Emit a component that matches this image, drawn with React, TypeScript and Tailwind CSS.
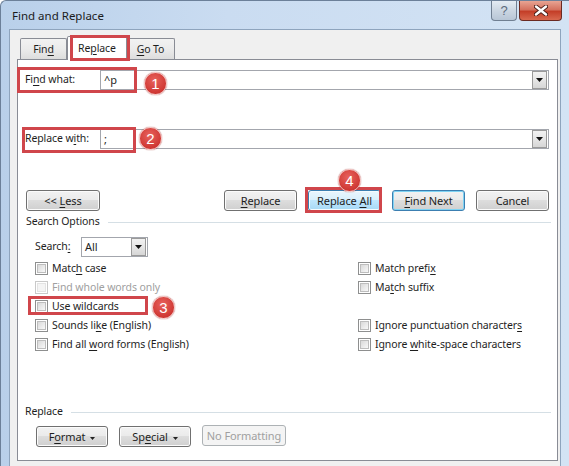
import React from "react";

type BtnProps = {
  children: React.ReactNode;
  className?: string;
  variant?: "normal" | "hover" | "default" | "disabled";
};

const WinButton: React.FC<BtnProps> = ({ children, className = "", variant = "normal" }) => {
  let look =
    "border-[#707070] bg-[linear-gradient(#f2f2f2,#ebebeb_45%,#dddddd_50%,#cfcfcf)] shadow-[inset_0_0_0_1px_#fbfbfb] text-[#1e1e1e]";
  if (variant === "hover")
    look =
      "border-[#3c7fb1] bg-[linear-gradient(#eaf6fd,#d9f0fc_45%,#bee6fd_50%,#a7d9f5)] shadow-[inset_0_0_0_1px_#f4fbfe] text-[#1e1e1e]";
  if (variant === "default")
    look =
      "border-[#3c7fb1] bg-[linear-gradient(#f2f2f2,#ebebeb_45%,#dddddd_50%,#cfcfcf)] shadow-[inset_0_0_0_1px_#7fd3f3] text-[#1e1e1e]";
  if (variant === "disabled") look = "border-[#adb2b5] bg-[#f4f4f4] text-[#a0a0a0]";
  return (
    <div
      className={`h-[21px] rounded-[3px] border flex items-center justify-center text-[11px] leading-none ${look} ${className}`}
    >
      <span>{children}</span>
    </div>
  );
};

const U: React.FC<{ children: React.ReactNode }> = ({ children }) => (
  <span className="underline underline-offset-[2px] decoration-1">{children}</span>
);

const DropArrow: React.FC = () => (
  <div className="w-[15px] h-[18px] mr-px border border-[#9a9a9a] bg-[linear-gradient(#f2f2f2,#e6e6e6_50%,#d6d6d6)] flex items-center justify-center">
    <svg width="7" height="4" viewBox="0 0 7 4">
      <path d="M0 0 H7 L3.5 4 Z" fill="#111" />
    </svg>
  </div>
);

const Combo: React.FC<{ value: string; className?: string }> = ({ value, className = "" }) => (
  <div className={`h-[20px] border border-[#a3a6ad] bg-white flex items-center ${className}`}>
    <span className="pl-[3px] flex-1 text-[11px] text-[#1e1e1e]">{value}</span>
    <DropArrow />
  </div>
);

const CheckBox: React.FC<{ disabled?: boolean }> = ({ disabled }) => (
  <span
    className={`w-[13px] h-[13px] border p-px flex shrink-0 bg-white ${
      disabled ? "border-[#c9c9c9]" : "border-[#8e8f8f]"
    }`}
  >
    <span
      className={`flex-1 border ${
        disabled
          ? "border-[#e3e3e3] bg-[#f4f4f4]"
          : "border-[#bdbdbd] bg-[linear-gradient(135deg,#d9d9d9,#f8f8f8)]"
      }`}
    />
  </span>
);

const Check: React.FC<{ children: React.ReactNode; disabled?: boolean }> = ({ children, disabled }) => (
  <div className="h-[19px] flex items-center gap-[4px]">
    <CheckBox disabled={disabled} />
    <span className={disabled ? "text-[#a0a0a0]" : "text-[#1e1e1e]"}>{children}</span>
  </div>
);

const RedBox: React.FC<{ className: string }> = ({ className }) => (
  <div className={`absolute border-[3px] border-[#d0464b] pointer-events-none ${className}`} />
);

const Badge: React.FC<{ n: string; className: string }> = ({ n, className }) => (
  <div
    className={`absolute w-[23px] h-[23px] rounded-full border border-[#f1b9b7] bg-[radial-gradient(circle_at_45%_35%,#e8625c,#cf3834_70%,#b82a27)] shadow-[0_0_1px_#9a2a27] flex items-center justify-center text-white text-[15px] leading-none tracking-normal font-['Liberation_Sans',sans-serif] ${className}`}
  >
    {n}
  </div>
);

const Caret: React.FC = () => (
  <svg width="5" height="3" viewBox="0 0 5 3" className="inline-block ml-[5px] align-middle">
    <path d="M0 0 H5 L2.5 3 Z" fill="#222" />
  </svg>
);

export default function App() {
  return (
    <div className="w-[569px] h-[466px] overflow-hidden flex flex-col rounded-tl-[6px] border-l border-t border-[#6c8099] bg-[linear-gradient(90deg,#b9d0ea,#cadcf1_40%,#d3e3f4)] font-['Noto_Sans',sans-serif] text-[#1e1e1e] tracking-[-0.1px]">
      {/* title bar */}
      <div className="h-[28px] flex justify-between items-start">
        <div className="pl-[11px] pt-[7px] text-[11.5px] leading-[16px] text-[#1b1b1b] tracking-normal">Find and Replace</div>
        <div className="flex gap-[2px] pr-[7px]">
          <div className="w-[26px] h-[20px] rounded-b-[4px] border border-t-0 border-[#707f92] bg-[linear-gradient(#e4ebf3,#cbd6e2_50%,#b8c6d6)] flex items-center justify-center text-[13px] leading-none text-[#5d6b7d] font-['Liberation_Sans',sans-serif]">
            ?
          </div>
          <div className="w-[43px] h-[20px] rounded-b-[4px] border border-t-0 border-[#6b2a22] bg-[linear-gradient(#e8a493,#d4725f_45%,#c43e28_55%,#d8694f)] flex items-center justify-center">
            <svg width="14" height="11" viewBox="0 0 14 11">
              <path d="M2 1.5 L12 9.5 M12 1.5 L2 9.5" stroke="#4a1c16" strokeWidth="4.2" strokeLinecap="round" />
              <path d="M2 1.5 L12 9.5 M12 1.5 L2 9.5" stroke="#ffffff" strokeWidth="2.4" strokeLinecap="round" />
            </svg>
          </div>
        </div>
      </div>

      {/* dialog body */}
      <div className="flex-1 ml-[8px] w-[552px] bg-[#f0f0f0] border-l border-t border-r border-[#8ea4bd] pt-[6px] pl-[7px] pr-[2px] pb-[5px] flex flex-col text-[10.5px]">
        {/* tabs */}
        <div className="relative z-10 h-[23px] flex items-end pl-[3px]">
          <div className="w-[47px] h-[21px] border border-b-0 border-[#898c95] rounded-t-[2px] bg-[linear-gradient(#f2f2f2,#ebebeb_50%,#dddddd)] flex items-center justify-center pt-[2px]">
            <span>
              Fin<U>d</U>
            </span>
          </div>
          <div className="w-[60px] h-[24px] -mb-px border border-b-0 border-[#898c95] rounded-t-[2px] bg-white flex items-center justify-center">
            <span>
              Re<U>p</U>lace
            </span>
          </div>
          <div className="w-[48px] h-[21px] border border-b-0 border-l-0 border-[#898c95] rounded-t-[2px] bg-[linear-gradient(#f2f2f2,#ebebeb_50%,#dddddd)] flex items-center justify-center pt-[2px]">
            <span>
              <U>G</U>o To
            </span>
          </div>
          <RedBox className="left-[53px] top-[-1px] w-[60px] h-[26px]" />
        </div>

        {/* tab panel */}
        <div className="relative flex-1 bg-white border border-[#898c95] pl-[7px] pr-[8px] flex flex-col">
          <div className="mt-[10px] h-[20px] flex items-center">
            <span className="w-[75px]">
              Fi<U>n</U>d what:
            </span>
            <Combo value="^p" className="flex-1" />
          </div>

          <div className="mt-[39px] h-[20px] flex items-center">
            <span className="w-[75px]">
              Replace w<U>i</U>th:
            </span>
            <Combo value=";" className="flex-1" />
          </div>

          <div className="mt-[41px] h-[21px] flex items-center">
            <WinButton className="w-[74px] ml-px">
              &lt;&lt; <U>L</U>ess
            </WinButton>
            <div className="flex-1" />
            <div className="flex gap-[11px]">
              <WinButton className="w-[73px]">
                <U>R</U>eplace
              </WinButton>
              <WinButton className="w-[73px]" variant="hover">
                Replace <U>A</U>ll
              </WinButton>
              <WinButton className="w-[73px]" variant="default">
                <U>F</U>ind Next
              </WinButton>
              <WinButton className="w-[73px]">Cancel</WinButton>
            </div>
          </div>

          <div className="mt-[3px] h-[16px] flex items-center pl-px">
            <span>Search Options</span>
            <div className="flex-1 h-px bg-[#d5dfe5] ml-[8px] -mr-[2px]" />
          </div>

          <div className="mt-[7px] h-[20px] flex items-center pl-[10px]">
            <span className="w-[46px]">
              Search<U>:</U>
            </span>
            <Combo value="All" className="w-[67px]" />
          </div>

          <div className="mt-[2px] pl-[10px] grid grid-cols-[323px_1fr]">
            <div className="flex flex-col">
              <Check>
                Matc<U>h</U> case
              </Check>
              <Check disabled>Find whole words only</Check>
              <Check>
                <U>U</U>se wildcards
              </Check>
              <Check>
                Sounds li<U>k</U>e (English)
              </Check>
              <Check>
                Find all <U>w</U>ord forms (English)
              </Check>
            </div>
            <div className="flex flex-col">
              <Check>
                Match prefi<U>x</U>
              </Check>
              <Check>
                Ma<U>t</U>ch suffix
              </Check>
              <div className="h-[19px]" />
              <Check>
                Ignore punctuation character<U>s</U>
              </Check>
              <Check>
                Ignore <U>w</U>hite-space characters
              </Check>
            </div>
          </div>

          <div className="mt-[50px] h-[16px] flex items-center">
            <span>Replace</span>
            <div className="flex-1 h-px bg-[#d5dfe5] ml-[8px] -mr-[2px]" />
          </div>

          <div className="mt-[6px] h-[21px] flex items-center pl-[11px] gap-[11px]">
            <WinButton className="w-[72px]">
              F<U>o</U>rmat
              <Caret />
            </WinButton>
            <WinButton className="w-[72px]">
              Sp<U>e</U>cial
              <Caret />
            </WinButton>
            <WinButton className="w-[84px] -mt-[2px]" variant="disabled">
              No Formatting
            </WinButton>
          </div>

          {/* annotation overlays */}
          <RedBox className="left-[-1px] top-[7px] w-[120px] h-[26px]" />
          <Badge n="1" className="left-[126px] top-[12px]" />
          <RedBox className="left-[4px] top-[67px] w-[114px] h-[26px]" />
          <Badge n="2" className="left-[121px] top-[67px]" />
          <RedBox className="left-[287px] top-[127px] w-[77px] h-[26px]" />
          <Badge n="4" className="left-[320px] top-[109px]" />
          <RedBox className="left-[10px] top-[236px] w-[120px] h-[19px]" />
          <Badge n="3" className="left-[134px] top-[236px]" />
        </div>
      </div>
    </div>
  );
}
